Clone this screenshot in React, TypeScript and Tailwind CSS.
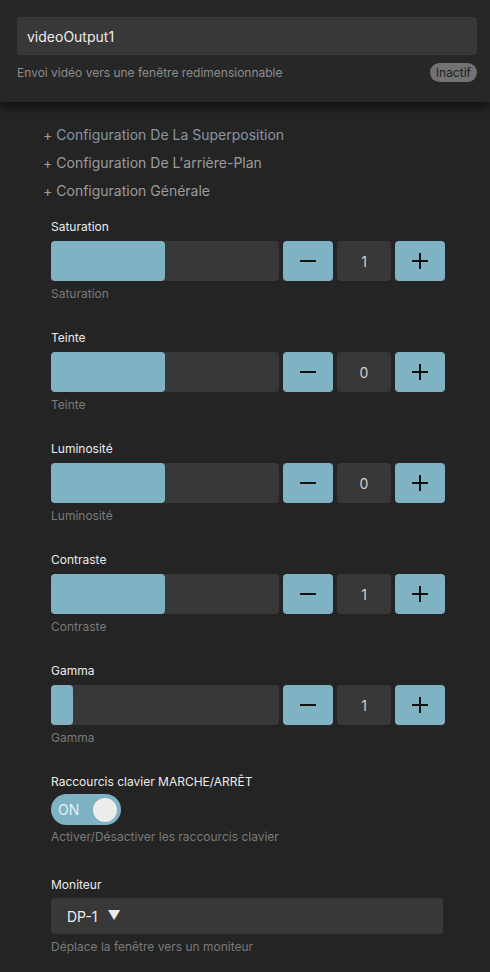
import React, { useState } from 'react';

const sliders = [
  { id: 'saturation', label: 'Saturation', value: 1, fill: '50%' },
  { id: 'teinte', label: 'Teinte', value: 0, fill: '50%' },
  { id: 'luminosite', label: 'Luminosité', value: 0, fill: '50%' },
  { id: 'contraste', label: 'Contraste', value: 1, fill: '50%' },
  { id: 'gamma', label: 'Gamma', value: 1, fill: '22px' },
];

const sections = [
  'Configuration De La Superposition',
  "Configuration De L'arrière-Plan",
  'Configuration Générale',
];

const MinusIcon = () => (
  <svg width="18" height="18" viewBox="0 0 18 18">
    <line x1="1" y1="9" x2="17" y2="9" stroke="#111" strokeWidth="2" />
  </svg>
);

const PlusIcon = () => (
  <svg width="18" height="18" viewBox="0 0 18 18">
    <line x1="1" y1="9" x2="17" y2="9" stroke="#111" strokeWidth="2" />
    <line x1="9" y1="1" x2="9" y2="17" stroke="#111" strokeWidth="2" />
  </svg>
);

const SliderRow: React.FC<{ label: string; value: number; fill: string }> = ({ label, value, fill }) => (
  <div className="mb-[28px]">
    <div className="text-[12px] leading-4 text-[#ececec] mb-[6px]">{label}</div>
    <div className="flex gap-[4px] h-10">
      <div className="w-[228px] bg-[#383838] rounded-[4px]">
        <div className="h-full bg-[#7fb3c4] rounded-[4px]" style={{ width: fill }} />
      </div>
      <button className="w-[50px] bg-[#7fb3c4] rounded-[4px] flex items-center justify-center">
        <MinusIcon />
      </button>
      <div className="w-[54px] bg-[#383838] rounded-[4px] flex items-center justify-center text-[14px] text-[#d0d0d0]">
        {value}
      </div>
      <button className="w-[50px] bg-[#7fb3c4] rounded-[4px] flex items-center justify-center">
        <PlusIcon />
      </button>
    </div>
    <div className="text-[12px] leading-4 text-[#7a7a7a] mt-[5px]">{label}</div>
  </div>
);

export default function App() {
  const [on, setOn] = useState(true);

  return (
    <div className="min-h-[972px] bg-[#242424] font-['Inter',sans-serif]">
      <div className="bg-[#272727] pl-[17px] pr-[13px] pt-[17px] pb-[20px] shadow-[0_4px_10px_rgba(0,0,0,0.65)] relative">
        <div className="h-[38px] bg-[#383838] rounded-[4px] flex items-center px-[10px] text-[14px] text-[#ececec]">
          videoOutput1
        </div>
        <div className="flex items-center justify-between mt-[8px]">
          <span className="text-[12px] text-[#8c8c8c]">Envoi vidéo vers une fenêtre redimensionnable</span>
          <span className="h-[19px] px-[6px] rounded-full bg-[#727272] text-[12px] leading-[19px] text-[#1f1f1f]">Inactif</span>
        </div>
      </div>

      <div className="pt-[19px] pl-[43px]">
        {sections.map((s, i) => (
          <div key={s} className="h-[28px] flex items-center text-[14px] leading-5">
            <span className="text-[#a0a0a0] mr-[4px] text-[14px]">+</span>
            <span className={i === 0 ? 'text-[#8a96a2]' : 'text-[#9c9c9c]'}>{s}</span>
          </div>
        ))}
      </div>

      <div className="pl-[51px] pr-[45px] pt-[14px]">
        {sliders.map((s) => (
          <SliderRow key={s.id} label={s.label} value={s.value} fill={s.fill} />
        ))}

        <div className="mb-[32px]">
          <div className="text-[12px] leading-4 text-[#ececec] mb-[4px]">Raccourcis clavier MARCHE/ARRÊT</div>
          <button
            onClick={() => setOn(!on)}
            className="w-[70px] h-[31px] rounded-full bg-[#7fb3c4] flex items-center pl-[7px] pr-[4px] justify-between"
          >
            <span className="text-[14px] text-[#e6eef1]">{on ? 'ON' : 'OFF'}</span>
            <span className="w-[24px] h-[24px] rounded-full bg-[#ececec]" />
          </button>
          <div className="text-[12px] leading-4 text-[#7a7a7a] mt-[4px]">Activer/Désactiver les raccourcis clavier</div>
        </div>

        <div>
          <div className="text-[12px] leading-4 text-[#ececec] mb-[5px]">Moniteur</div>
          <div className="w-[392px] h-[36px] bg-[#383838] rounded-[4px] flex items-center pl-[16px] text-[14px] text-[#ececec]">
            DP-1
            <span className="ml-[10px] text-[13px]">▼</span>
          </div>
          <div className="text-[12px] leading-4 text-[#7a7a7a] mt-[5px]">Déplace la fenêtre vers un moniteur</div>
        </div>
      </div>
    </div>
  );
}
